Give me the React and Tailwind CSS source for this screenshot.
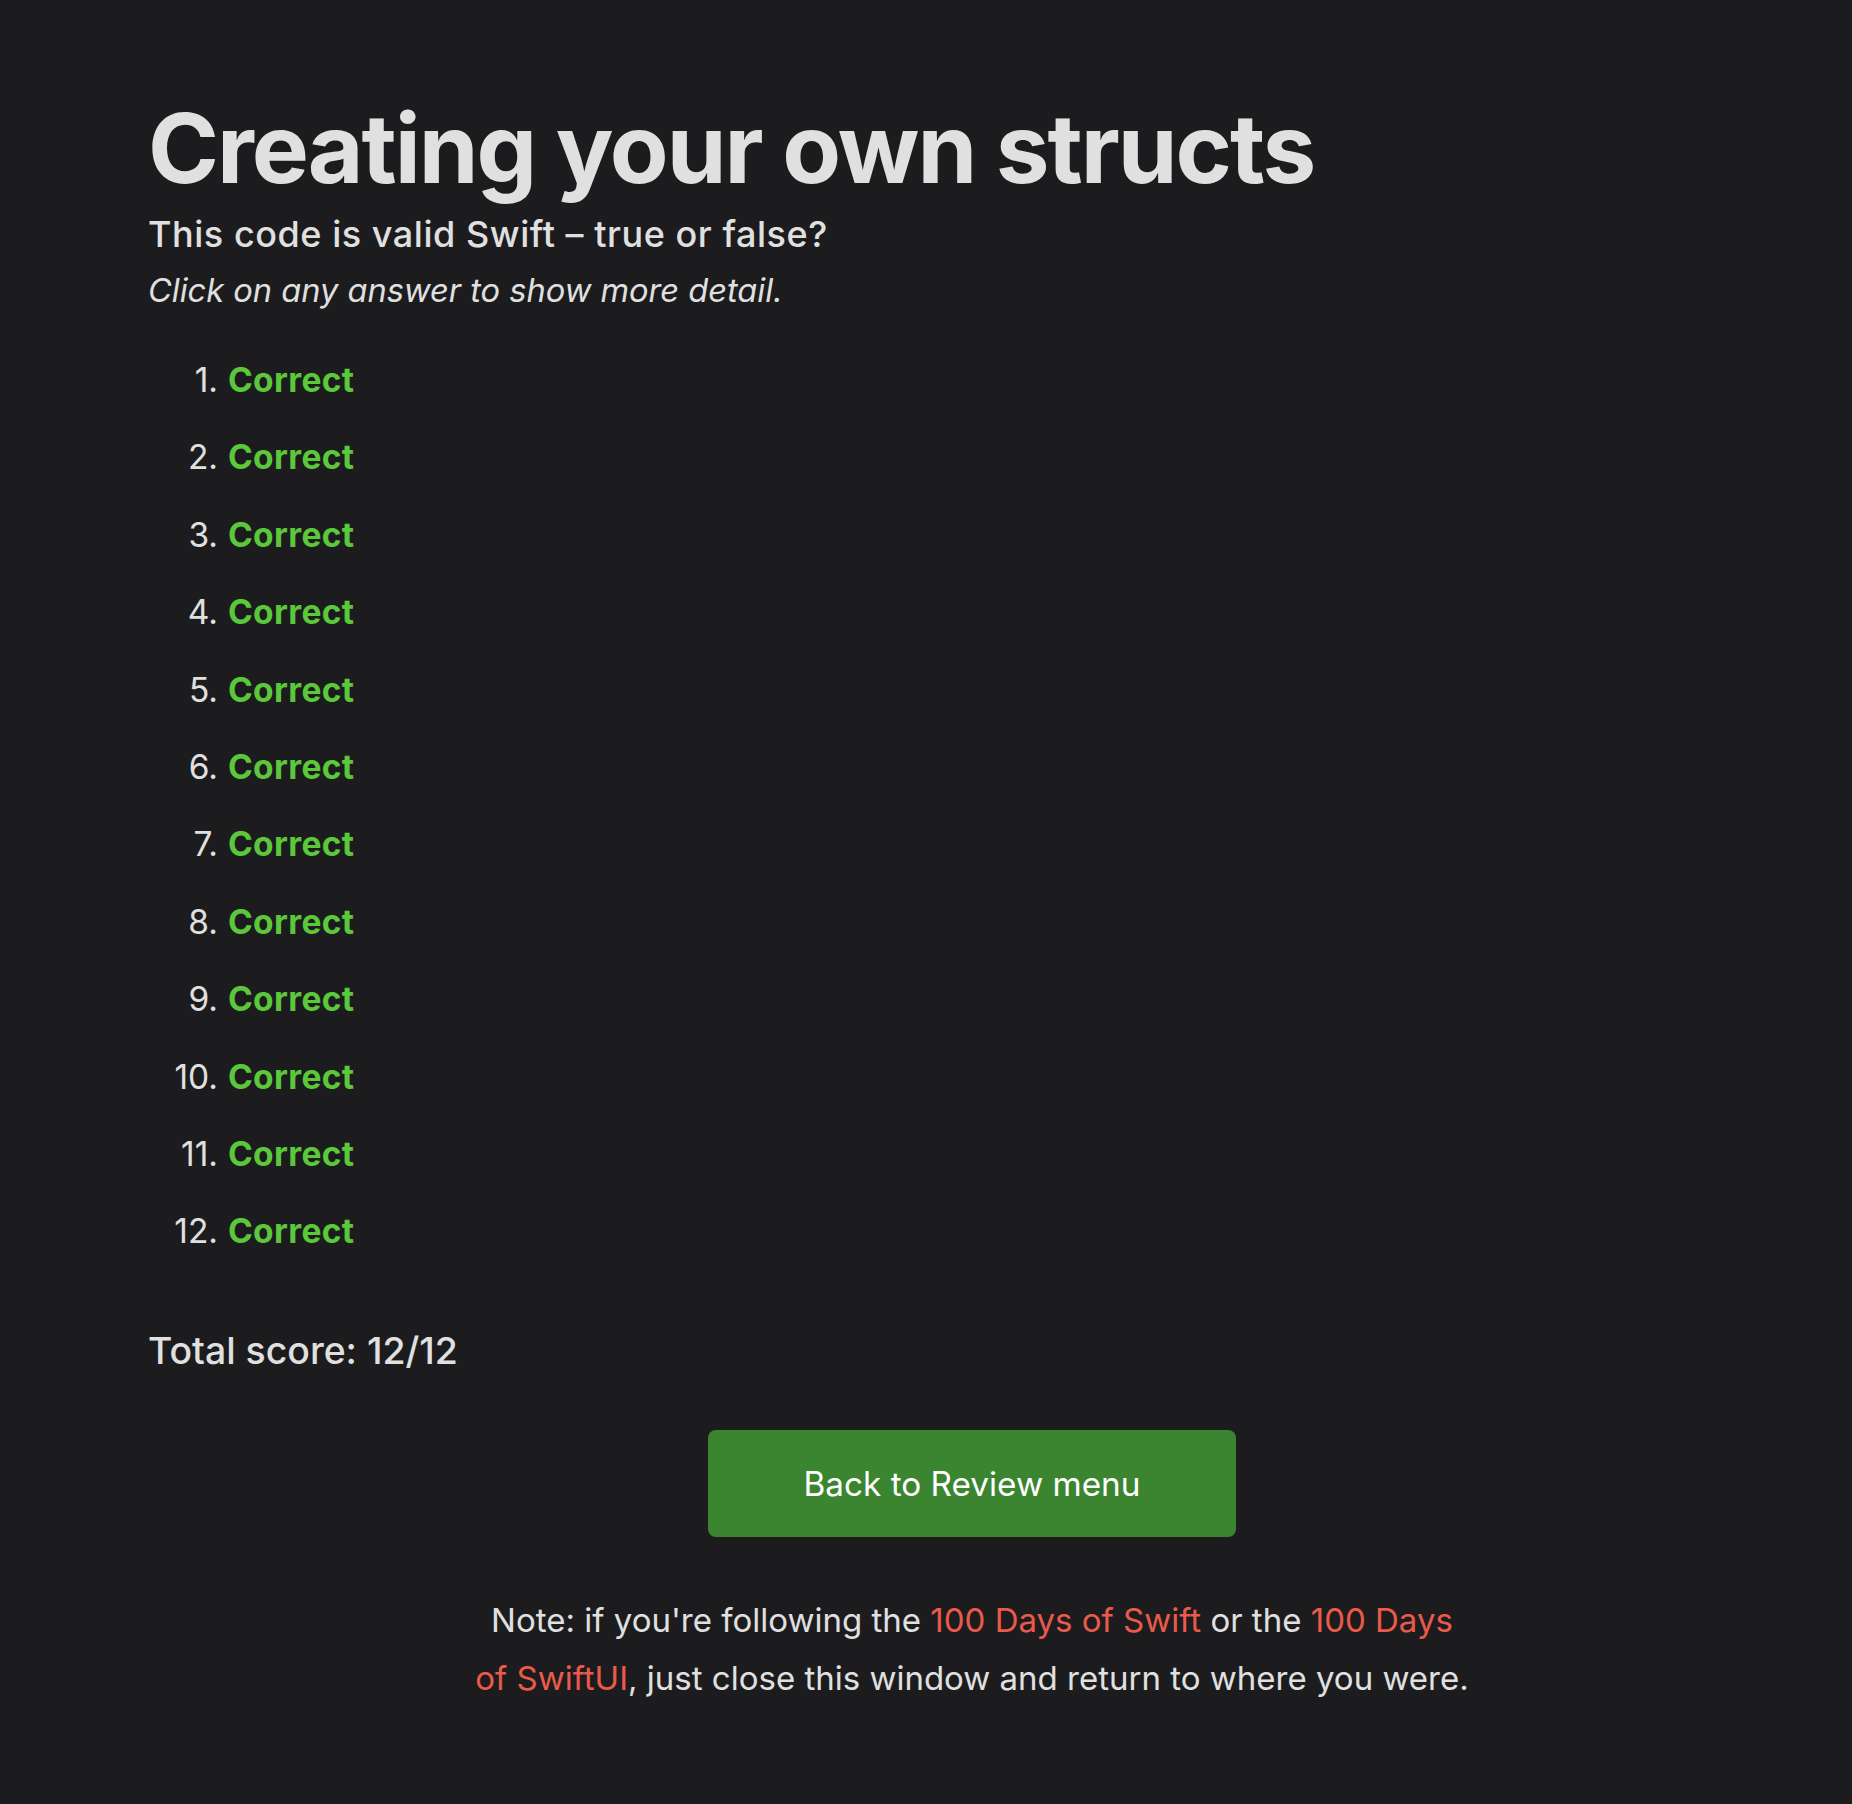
import React from "react";

export default function App() {
  const items = Array.from({ length: 12 }, (_, i) => i + 1);
  return (
    <div
      className="min-h-[1804px] w-full bg-[#1c1c1e] text-[#e0e0e0]"
      style={{ fontFamily: "Inter, 'Noto Sans', sans-serif" }}
    >
      <div className="pt-[95px] pl-[148px] pr-[56px] pb-[99px]">
        <h1 className="text-[96px] leading-[106px] font-bold tracking-[-0.021em] text-[#e0e0e0]">
          Creating your own structs
        </h1>
        <p className="mt-[5px] text-[36px] leading-[56px] font-medium tracking-[0.015em]">
          This code is valid Swift – true or false?
        </p>
        <p className="text-[32.6px] leading-[56px] italic">
          Click on any answer to show more detail.
        </p>
        <ol className="mt-[24px]">
          {items.map((n) => (
            <li key={n} className="flex text-[33.5px] leading-[77.4px]">
              <span className="w-[70px] text-right">{n}.</span>
              <span className="ml-[10px] font-bold text-[#5bc73b] cursor-pointer tracking-[0.01em]">
                Correct
              </span>
            </li>
          ))}
        </ol>
        <p className="mt-[52px] text-[37.4px] leading-[56px] font-medium">
          Total score: 12/12
        </p>
        <div className="mt-[51px] flex justify-center">
          <button className="w-[528px] h-[107px] pt-[3px] rounded-[8px] bg-[#3b8530] text-white text-[33.3px] font-normal">
            Back to Review menu
          </button>
        </div>
        <p className="mt-[54px] text-center text-[33px] leading-[58px]">
          Note: if you're following the{" "}
          <a className="text-[#ea5a4a]">100 Days of Swift</a> or the{" "}
          <a className="text-[#ea5a4a]">100 Days</a>
          <br />
          <a className="text-[#ea5a4a]">of SwiftUI</a>, just close this window
          and return to where you were.
        </p>
      </div>
    </div>
  );
}
